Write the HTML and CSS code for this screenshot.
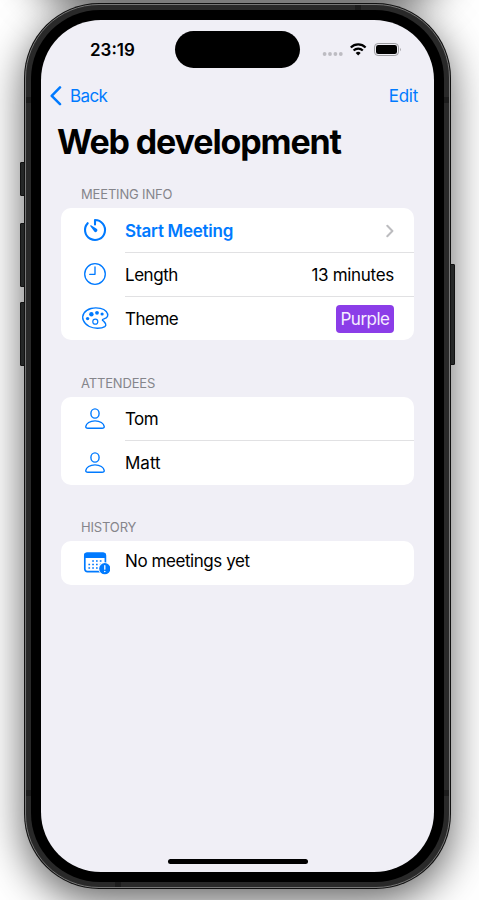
FILE: index.html
```html
<!DOCTYPE html>
<html lang="en">
<head>
<meta charset="utf-8">
<title>Web development</title>
<link rel="stylesheet" href="styles.css">
</head>
<body>
<div class="phone">
  <i class="key mute"></i><i class="key vol-up"></i><i class="key vol-down"></i><i class="key power"></i>
  <i class="band band-tl"></i><i class="band band-tr"></i><i class="band band-bl"></i><i class="band band-br"></i><i class="band-h band-top"></i><i class="band-h band-bottom"></i>
  <div class="bezel">
    <div class="screen">
      <header class="status">
        <span class="time">23:19</span>
        <span class="island"></span>
        <svg class="signals" width="82" height="16" viewBox="0 0 82 16">
          <g fill="#bdbcc2"><circle cx="5.6" cy="12" r="1.9"/><circle cx="11" cy="12" r="1.9"/><circle cx="16.4" cy="12" r="1.9"/><circle cx="21.8" cy="12" r="1.9"/></g>
          <g fill="none" stroke="#000" stroke-width="2.2"><path d="M31.8 5.5a10.5 10.5 0 0 1 14.8 0"/><path d="M34.6 8.5a6.5 6.5 0 0 1 9.2 0"/></g>
          <path d="M36.7 10.9a3.7 3.7 0 0 1 5 0L39.2 13.500z"/>
          <rect x="55.500" y="1.5" width="24" height="12" rx="3.6" fill="none" stroke="#9c9ca0"/>
          <rect x="57" y="3" width="21" height="9" rx="2.3"/>
          <path d="M81 5.700q1.500 1.800 0 3.600z" fill="#99999d"/>
        </svg>
      </header>
      <nav class="nav">
        <a class="back"><svg width="12" height="20" viewBox="0 0 12 20"><path d="M10 1.400 1.700 9.800 10 18.200" fill="none" stroke="#007aff" stroke-width="2.500" stroke-linecap="round" stroke-linejoin="round"/></svg><span class="t-back">Back</span></a>
        <a class="edit">Edit</a>
      </nav>
      <h1>Web development</h1>
      <main>
        <h2 class="t-info">MEETING INFO</h2>
        <section class="card info">
          <div class="row start">
            <svg class="icon" viewBox="0 0 30 30"><path d="M15 9.500V5a10 10 0 1 1-7.300 3.200" fill="none" stroke="#007aff" stroke-width="2.100" stroke-linecap="round" stroke-linejoin="round"/><path d="M10.200 10.500q.3-.5.900-.2l5.500 3.500a1.800 1.800 0 1 1-2.500 2.500l-3.900-5.200z" fill="#007aff"/></svg>
            <div class="cell"><span class="t-start">Start Meeting</span><svg class="chevron" width="8" height="14" viewBox="0 0 8 14"><path d="M1.300 1.800 6.400 7l-5.100 5.200" fill="none" stroke="#bcbcbf" stroke-width="2" stroke-linecap="round" stroke-linejoin="round"/></svg></div>
          </div>
          <div class="row">
            <svg class="icon" viewBox="0 0 30 30" fill="none" stroke="#007aff" stroke-width="1.350" stroke-linecap="round" stroke-linejoin="round"><circle cx="15" cy="15" r="10.300"/><path d="M15 8v7.300H9.700"/></svg>
            <div class="cell"><span class="t-length">Length</span><span class="t-minutes">13 minutes</span></div>
          </div>
          <div class="row">
            <svg class="icon" viewBox="0 0 30 30"><path d="M23.700 18.300c1.500 1.600 3.300 3.800 1.100 5.300-3.400 2.200-11 2.200-15.500-.1-6-3-8.200-9-5.300-13.400C7 5.500 14.200 4 20.400 5.400c5.200 1.100 8 4.500 7.200 7.700-.8 3.300-5.400 2.300-5.200 3.800 0 .5.600.7 1.300 1.400z" fill="none" stroke="#007aff" stroke-width="1.400" stroke-linejoin="round"/><g fill="#007aff"><circle cx="7.600" cy="15.600" r="1.700"/><circle cx="11.400" cy="11.200" r="2.200"/><circle cx="17" cy="9.800" r="1.900"/><circle cx="22.100" cy="11" r="1.600"/></g><circle cx="15.300" cy="18.700" r="2.500" fill="none" stroke="#007aff" stroke-width="1.200"/></svg>
            <div class="cell"><span class="t-theme">Theme</span><span class="theme"><b class="t-purple">Purple</b></span></div>
          </div>
        </section>
        <h2 class="t-att">ATTENDEES</h2>
        <section class="card">
          <div class="row">
            <svg class="icon" viewBox="0 0 30 30" fill="none" stroke="#007aff" stroke-width="1.400"><ellipse cx="15" cy="9.500" rx="4.100" ry="4.600"/><path d="M7.900 24.300c-1.500 0-2.300-.8-2.100-2 .5-2.900 4-5.400 9.200-5.400s8.700 2.500 9.200 5.400c.2 1.200-.6 2-2.100 2z"/></svg>
            <div class="cell"><span class="t-tom">Tom</span></div>
          </div>
          <div class="row">
            <svg class="icon" viewBox="0 0 30 30" fill="none" stroke="#007aff" stroke-width="1.400"><ellipse cx="15" cy="9.500" rx="4.100" ry="4.600"/><path d="M7.900 24.300c-1.500 0-2.300-.8-2.100-2 .5-2.900 4-5.400 9.200-5.400s8.700 2.500 9.200 5.400c.2 1.200-.6 2-2.100 2z"/></svg>
            <div class="cell"><span class="t-matt">Matt</span></div>
          </div>
        </section>
        <h2 class="t-hist">HISTORY</h2>
        <section class="card">
          <div class="row">
            <svg class="icon calendar" viewBox="0 0 30 30"><rect x="4.800" y="5.300" width="20.600" height="18.300" rx="2.500" fill="none" stroke="#007aff" stroke-width="1.700"/><path d="M4 10V7.500Q4 4.600 7 4.600h16q3 0 3 2.900V10z" fill="#007aff"/><g stroke="#007aff" stroke-width="1.700" stroke-dasharray="1.700 2.100"><path d="M12.200 13h10M8.400 16.500h13.400M8.400 20h10"/></g><circle cx="24.800" cy="20.700" r="6.500" fill="#fff"/><circle cx="24.800" cy="20.700" r="5.600" fill="#007aff"/><path d="M24.800 17.700v3.500" stroke="#fff" stroke-width="1.300" stroke-linecap="round"/><circle cx="24.800" cy="23.500" r=".8" fill="#fff"/></svg>
            <div class="cell"><span class="t-none">No meetings yet</span></div>
          </div>
        </section>
      </main>
      <div class="home"></div>
    </div>
  </div>
</div>
</body>
</html>
```
FILE: styles.css
```css
* { box-sizing: border-box; }
html { background: #fff; }
body {
  margin: 0;
  width: 479px;
  height: 900px;
  padding: 3px 0 0 24px;
  overflow: hidden;
  font-family: Inter, "Liberation Sans", sans-serif;
  font-size: 17px;
  color: #000;
  background: #fff;
}
.phone {
  position: relative;
  width: 427px;
  height: 886px;
  padding: 1px;
  border-radius: 75px;
  background: #111;
  box-shadow: 0 12px 42px rgba(0,0,0,.62), 0 -878px 42px rgba(0,0,0,.62);
}
.phone::before {
  content: "";
  position: absolute;
  inset: 1px;
  border: 1px solid #777;
  border-radius: 74px;
  background: #292929;
}
.bezel {
  position: relative;
  margin: 6px;
  width: 413px;
  height: 872px;
  padding: 10px;
  border-radius: 69px;
  background: #000;
}
.screen {
  display: flex;
  flex-direction: column;
  width: 393px;
  height: 852px;
  border-radius: 60px;
  background: #f0eff6;
}
.key { position: absolute; width: 5px; background: #252727; border: 1px solid #111; border-radius: 1px; }
.mute { left: -4px; top: 159px; height: 34px; }
.vol-up { left: -4px; top: 220px; height: 64px; }
.vol-down { left: -4px; top: 299px; height: 64px; }
.power { right: -4px; top: 261px; height: 101px; }
.band, .band-h { position: absolute; z-index: 1; background: #1c1c1c; }
.band { width: 5px; height: 6px; }
.band-tl { left: 2px; top: 94px; }
.band-tr { right: 2px; top: 94px; }
.band-bl { left: 2px; top: 787px; }
.band-br { right: 2px; top: 787px; }
.band-h { width: 6px; height: 5px; }
.band-top { left: 331px; top: 2px; }
.band-bottom { left: 91px; bottom: 2px; }

.status { display: flex; align-items: center; height: 59px; padding-left: 49px; }
.time { width: 85px; font-weight: 600; }
.island { width: 125px; height: 37px; border-radius: 19px; background: #000; }
.signals { margin-left: 19px; }
.nav { display: flex; justify-content: space-between; align-items: center; height: 34px; padding: 0 16px 0 9px; color: #007aff; }
.back { display: flex; align-items: center; gap: 8px; }
.t-back { letter-spacing: -.6px; }
.edit { letter-spacing: -.25px; }
h1 { margin: 4px 0 0 16px; height: 50px; font-size: 34px; line-height: 50px; font-weight: 700; letter-spacing: -1.13px; white-space: nowrap; }
main { padding: 0 20px; }
h2 { margin: 0; padding-left: 20px; font-size: 13px; line-height: 18px; font-weight: 400; letter-spacing: -.16px; color: #85858b; }
.t-info { margin-top: 18px; margin-bottom: 5px; }
.t-att, .t-hist { margin-top: 33px; margin-bottom: 5px; }
.t-att { margin-top: 34px; }
.card { width: 353px; border-radius: 10px; background: #fff; overflow: hidden; }
.row { display: flex; align-items: center; height: 44px; padding-left: 19px; }
.icon { flex: none; width: 30px; height: 30px; margin-right: 15px; }
.calendar { margin-top: -1px; }
.cell { flex: 1; display: flex; align-items: center; justify-content: space-between; height: 44px; padding-right: 20px; border-bottom: 1px solid #e1e1e3; }
.row:last-child .cell { border-bottom-color: transparent; }
.info .cell { border-bottom: 0; border-top: 1px solid #e1e1e3; }
.info .row:first-child .cell { border-top-color: transparent; }
.start { color: #007aff; font-weight: 600; }
.t-start { letter-spacing: -.27px; }
.t-length { letter-spacing: -.45px; }
.t-minutes { letter-spacing: -.3px; }
.t-theme, .t-purple { letter-spacing: -.5px; }
.t-tom { letter-spacing: -.6px; }
.t-none { letter-spacing: -.43px; margin-top: -3px; }
.theme { padding: 0 4.500px 0 4px; height: 28px; line-height: 29px; border-radius: 4px; background: #8b3de8; color: #f5edff; }
.theme b { font-weight: 400; }
.home { width: 140px; height: 5px; border-radius: 3px; background: #000; margin: auto auto 8px 127px; }
```
